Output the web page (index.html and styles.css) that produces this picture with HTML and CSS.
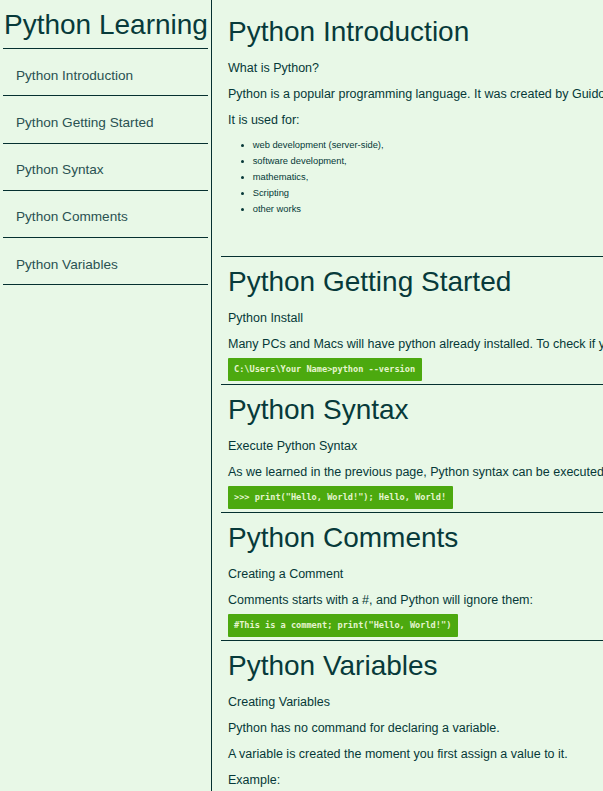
FILE: index.html
```html
<!DOCTYPE html>
<html lang="en">
<head>
<meta charset="utf-8">
<title>Python Learning</title>
<link rel="stylesheet" href="styles.css">
</head>
<body>
<div class="page">
  <nav class="navbar">
    <header class="nav-title">Python Learning</header>
    <a class="nav-link" href="#Python_Introduction">Python Introduction</a>
    <a class="nav-link" href="#Python_Getting_Started">Python Getting Started</a>
    <a class="nav-link" href="#Python_Syntax">Python Syntax</a>
    <a class="nav-link" href="#Python_Comments">Python Comments</a>
    <a class="nav-link" href="#Python_Variables">Python Variables</a>
  </nav>
  <main class="main">
    <section class="doc first" id="Python_Introduction">
      <h1 class="doc-title">Python Introduction</h1>
      <p class="text">What is Python?</p>
      <p class="text">Python is a popular programming language. It was created by Guido van Rossum, and released in 1991.</p>
      <p class="text">It is used for:</p>
      <ul class="uses">
        <li>web development (server-side),</li>
        <li>software development,</li>
        <li>mathematics,</li>
        <li>Scripting</li>
        <li>other works</li>
      </ul>
    </section>
    <section class="doc" id="Python_Getting_Started">
      <h1 class="doc-title">Python Getting Started</h1>
      <p class="text">Python Install</p>
      <p class="text">Many PCs and Macs will have python already installed. To check if you have python installed on a Windows PC.</p>
      <code class="code">C:\Users\Your Name&gt;python --version</code>
    </section>
    <section class="doc" id="Python_Syntax">
      <h1 class="doc-title">Python Syntax</h1>
      <p class="text">Execute Python Syntax</p>
      <p class="text">As we learned in the previous page, Python syntax can be executed by writing directly in the Command Line.</p>
      <code class="code">&gt;&gt;&gt; print("Hello, World!"); Hello, World!</code>
    </section>
    <section class="doc" id="Python_Comments">
      <h1 class="doc-title">Python Comments</h1>
      <p class="text">Creating a Comment</p>
      <p class="text">Comments starts with a #, and Python will ignore them:</p>
      <code class="code">#This is a comment; print("Hello, World!")</code>
    </section>
    <section class="doc" id="Python_Variables">
      <h1 class="doc-title">Python Variables</h1>
      <p class="text">Creating Variables</p>
      <p class="text">Python has no command for declaring a variable.</p>
      <p class="text">A variable is created the moment you first assign a value to it.</p>
      <p class="text">Example:</p>
      <code class="code">x = 5; y = "John"; print(x); print(y)</code>
    </section>
  </main>
</div>
</body>
</html>
```
FILE: styles.css
```css
html, body {
  margin: 0;
  padding: 0;
}

body {
  background: #e8f8e7;
  color: #063838;
  font-family: "Liberation Sans", Arial, sans-serif;
}

.page {
  display: flex;
  height: 100vh;
  overflow: hidden;
}

.navbar {
  flex: 0 0 auto;
  width: 205px;
  padding: 0 3px;
  border-right: 1px solid #053030;
  display: flex;
  flex-direction: column;
}

.nav-title {
  font-size: 28px;
  line-height: 32px;
  padding: 9px 0 7px 1px;
  border-bottom: 1px solid #053030;
  color: #073a3a;
  white-space: nowrap;
}

.nav-link {
  display: block;
  font-size: 13.6px;
  line-height: 16px;
  padding: 18.5px 0 11.8px 13px;
  border-bottom: 1px solid #053030;
  color: #2a5252;
  text-decoration: none;
  white-space: nowrap;
}

.main {
  flex: 1 1 auto;
  min-width: 0;
  overflow: hidden;
}

.doc {
  margin-left: 9px;
  padding: 9px 0 0 7px;
  border-top: 1px solid #053030;
  display: flex;
  flex-direction: column;
  align-items: flex-start;
}

.doc.first {
  border-top: 0;
  padding-top: 16px;
}

.doc-title {
  margin: 0 0 12px;
  font-size: 28px;
  line-height: 32px;
  font-weight: normal;
  color: #073a3a;
  white-space: nowrap;
}

.text {
  margin: 0 0 10px;
  font-size: 12.5px;
  line-height: 16px;
  white-space: nowrap;
}

.text + .code {
  margin-top: -4px;
}

.code {
  display: block;
  margin-bottom: 2.8px;
  padding: 0 7px 0 6px;
  height: 23.3px;
  line-height: 23.3px;
  background: #4ca90f;
  color: #e6f5cf;
  font-family: "DejaVu Sans Mono", monospace;
  font-weight: bold;
  font-size: 8.6px;
  border-radius: 1px;
  white-space: nowrap;
}

.uses {
  margin: -1.5px 0 39px;
  padding-left: 24.7px;
  font-size: 9.35px;
  line-height: 16px;
}
```
